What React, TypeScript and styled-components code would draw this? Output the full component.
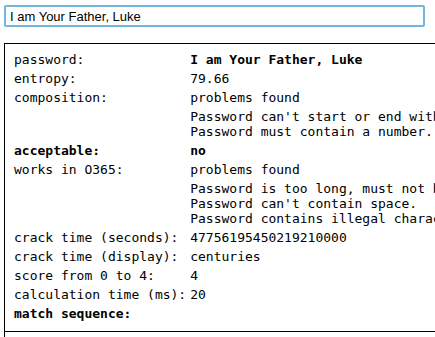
import React, { useEffect, useRef, useState } from 'react'
import styled, { createGlobalStyle } from 'styled-components'

interface Row {
    label: string,
    value?: string,
    strongLabel?: boolean,
    strongValue?: boolean,
    notes?: string[],
}

const rows: Row[] = [
    { label: 'password:', value: 'I am Your Father, Luke', strongValue: true },
    { label: 'entropy:', value: '79.66' },
    {
        label: 'composition:', value: 'problems found', notes: [
            "Password can't start or end with a space.",
            'Password must contain a number.',
        ]
    },
    { label: 'acceptable:', value: 'no', strongLabel: true, strongValue: true },
    {
        label: 'works in O365:', value: 'problems found', notes: [
            'Password is too long, must not be more than 16 characters.',
            "Password can't contain space.",
            'Password contains illegal characters.',
        ]
    },
    { label: 'crack time (seconds):', value: '47756195450219210000' },
    { label: 'crack time (display):', value: 'centuries' },
    { label: 'score from 0 to 4:', value: '4' },
    { label: 'calculation time (ms):', value: '20' },
    { label: 'match sequence:', strongLabel: true },
]

const App = () => {
    const [password, setPassword] = useState<string>('I am Your Father, Luke')
    const inputRef = useRef<HTMLInputElement>(null)

    // put the caret after the last character, like after typing
    useEffect(() => {
        const input = inputRef.current
        if (!input) return
        input.focus()
        input.setSelectionRange(input.value.length, input.value.length)
    }, [])

    return (
        <Page>
            <GlobalStyle />
            <PasswordInput
                ref={inputRef}
                type="text"
                value={password}
                onChange={e => setPassword(e.target.value)}
            />
            <Results>
                <ResultTable>
                    <tbody>
                        {rows.map(row => (
                            <React.Fragment key={row.label}>
                                <tr>
                                    <Label strong={row.strongLabel}>{row.label}</Label>
                                    <Value strong={row.strongValue}>{row.value}</Value>
                                </tr>
                                {row.notes && (
                                    <tr>
                                        <Label />
                                        <Value>
                                            {row.notes.map(note => (
                                                <Note key={note}>{note}</Note>
                                            ))}
                                        </Value>
                                    </tr>
                                )}
                            </React.Fragment>
                        ))}
                    </tbody>
                </ResultTable>
                <MatchSequence />
            </Results>
        </Page>
    )
}

export default App

const GlobalStyle = createGlobalStyle`
    html, body {
        margin: 0;
        padding: 0;
        overflow: hidden;
        background: #fff;
    }
`

const Page = styled.div`
    padding: 5px 0 0 4px;
    width: 800px;
`

const PasswordInput = styled.input`
    display: block;
    box-sizing: border-box;
    width: 421px;
    height: 22px;
    margin: 0;
    padding: 0 4px;
    border: 2px solid #74b5db;
    border-radius: 2px;
    outline: none;
    font-family: "Liberation Sans", Arial, sans-serif;
    font-size: 13px;
    color: #000;
    background: #fff;
    caret-color: #000;
`

const Results = styled.div`
    margin-top: 16px;
    border: 1px solid #000;
    padding: 5px 6px 0;
    height: 320px;
`

const ResultTable = styled.table`
    border-collapse: separate;
    border-spacing: 2px;
    font-family: "DejaVu Sans Mono", monospace;
    font-size: 13px;
    line-height: 15px;
    color: #000;
`

const Label = styled.td<{ strong?: boolean }>`
    padding: 1px;
    vertical-align: top;
    white-space: nowrap;
    font-weight: ${props => props.strong ? 700 : 400};
`

const Value = styled.td<{ strong?: boolean }>`
    padding: 1px;
    vertical-align: top;
    white-space: nowrap;
    font-weight: ${props => props.strong ? 700 : 400};
`

const Note = styled.div`
    white-space: pre;
`

const MatchSequence = styled.div`
    margin: 7px -6px 0;
    border-top: 1px solid #000;
`
